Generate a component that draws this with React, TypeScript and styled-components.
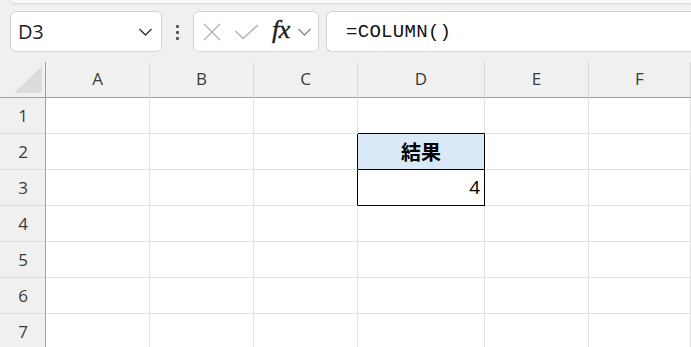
import React from "react";
import styled, { createGlobalStyle } from "styled-components";

const Global = createGlobalStyle`
  html, body { margin: 0; padding: 0; background: #f0f0f0; overflow: hidden; }
  #root { width: 691px; height: 347px; overflow: hidden; }
`;

const Page = styled.div`
  width: 691px;
  height: 347px;
  overflow: hidden;
  background: #f0f0f0;
  display: flex;
  flex-direction: column;
  font-family: "Open Sans", "Noto Sans", sans-serif;
  & > * { flex-shrink: 0; }
`;

const RibbonEdge = styled.div`
  margin-left: 12px;
  height: 3px;
  background: #f9f9f9;
  border-bottom-left-radius: 4px;
  box-shadow: 0 1px 2px rgba(0, 0, 0, 0.12);
`;

const Toolbar = styled.div`
  display: flex;
  align-items: center;
  padding: 8px 0 0 10px;
  height: 41px;
`;

const Box = styled.div<{ $w?: number }>`
  box-sizing: border-box;
  height: 41px;
  background: #fff;
  border: 1px solid #d4d4d4;
  border-radius: 6px;
  display: flex;
  align-items: center;
  ${(p) => (p.$w ? `width: ${p.$w}px;` : "flex: 1; border-right: none; border-radius: 6px 0 0 6px;")}
`;

const NameText = styled.span`
  font-family: "Open Sans", sans-serif;
  font-size: 20px;
  color: #1f1f1f;
  margin-left: 7px;
  flex: 1;
  letter-spacing: -0.3px;
`;

const Dots = styled.div`
  width: 31px;
  display: flex;
  flex-direction: column;
  align-items: center;
  gap: 3px;
  padding-top: 1px;
  span {
    width: 3px;
    height: 3px;
    background: #555;
    border-radius: 1px;
  }
`;

const Spacer = styled.div`
  width: 7px;
`;

const Formula = styled.span`
  font-family: "Liberation Mono", "DejaVu Sans Mono", monospace;
  font-size: 19px;
  color: #111;
  margin-left: 19px;
  letter-spacing: 0.3px;
`;

const Fx = styled.span`
  font-family: "Liberation Serif", serif;
  font-style: italic;
  font-weight: 400;
  font-size: 26px;
  color: #1c1c1c;
  margin-left: 12px;
  margin-top: -4px;
  letter-spacing: -0.5px;
  -webkit-text-stroke: 0.4px #1c1c1c;
`;

const Sheet = styled.div`
  margin-top: 10px;
  display: grid;
  grid-template-columns: 46px 104px 104px 104px 127px 104px 1fr;
  grid-template-rows: repeat(8, 36px);
`;

const Corner = styled.div`
  box-sizing: border-box;
  border-right: 1px solid #9e9e9e;
  border-bottom: 1px solid #9e9e9e;
  position: relative;
  &::after {
    content: "";
    position: absolute;
    left: 14px;
    top: 4px;
    width: 0;
    height: 0;
    border-left: 28px solid transparent;
    border-bottom: 27px solid #dcdcdc;
  }
`;

const ColHead = styled.div`
  box-sizing: border-box;
  border-right: 1px solid #d8d8d8;
  border-bottom: 1px solid #9e9e9e;
  display: flex;
  align-items: center;
  justify-content: center;
  font-size: 17px;
  color: #3a3a3a;
  padding-bottom: 2px;
`;

const RowHead = styled.div`
  box-sizing: border-box;
  border-right: 1px solid #9e9e9e;
  border-bottom: 1px solid #dadada;
  display: flex;
  align-items: center;
  justify-content: center;
  font-size: 17px;
  color: #3a3a3a;
  padding-left: 1px;
`;

const Cell = styled.div<{ $right?: boolean; $bottom?: boolean; $fill?: string; $align?: string; $bold?: boolean }>`
  box-sizing: border-box;
  background: ${(p) => p.$fill || "#fff"};
  border-right: 1px solid ${(p) => (p.$right ? "#000" : "#e1e1e1")};
  border-bottom: 1px solid ${(p) => (p.$bottom ? "#000" : "#e1e1e1")};
  display: flex;
  align-items: center;
  justify-content: ${(p) => p.$align || "flex-start"};
  padding: 0 4px 1px;
  font-family: "Open Sans", "Noto Sans CJK JP", sans-serif;
  font-size: ${(p) => (p.$bold ? "20px" : "19px")};
  font-weight: ${(p) => (p.$bold ? 700 : 400)};
  color: #000;
`;

const Chevron = ({ x = 0 }: { x?: number }) => (
  <svg width="15" height="10" viewBox="0 0 15 10" style={{ marginRight: x }}>
    <path d="M1.5 2 L7.5 8 L13.5 2" fill="none" stroke="#333" strokeWidth="1.4" />
  </svg>
);

const cols = ["A", "B", "C", "D", "E", "F"];

type CellSpec = { text?: string; right?: boolean; bottom?: boolean; fill?: string; align?: string; bold?: boolean };

function cellFor(r: number, c: number): CellSpec {
  const spec: CellSpec = {};
  if ((r === 2 || r === 3) && (c === 2 || c === 3)) spec.right = true;
  if ((r === 1 || r === 2 || r === 3) && c === 3) spec.bottom = true;
  if (r === 2 && c === 3) {
    spec.text = "結果";
    spec.fill = "#dae9f8";
    spec.align = "center";
    spec.bold = true;
  }
  if (r === 3 && c === 3) {
    spec.text = "4";
    spec.align = "flex-end";
  }
  return spec;
}

export default function App() {
  return (
    <Page>
      <Global />
      <RibbonEdge />
      <Toolbar>
        <Box $w={152}>
          <NameText>D3</NameText>
          <Chevron x={8} />
        </Box>
        <Dots>
          <span />
          <span />
          <span />
        </Dots>
        <Box $w={126}>
          <svg width="20" height="20" viewBox="0 0 20 20" style={{ marginLeft: 8 }}>
            <path d="M2 2 L18 18 M18 2 L2 18" stroke="#b5b5b5" strokeWidth="1.5" fill="none" />
          </svg>
          <svg width="26" height="20" viewBox="0 0 26 20" style={{ marginLeft: 12 }}>
            <path d="M1.5 9 L9 16.5 L24 3" stroke="#b5b5b5" strokeWidth="1.5" fill="none" />
          </svg>
          <Fx>fx</Fx>
          <svg width="15" height="10" viewBox="0 0 15 10" style={{ marginLeft: 7 }}>
            <path d="M1.5 2 L7.5 8 L13.5 2" fill="none" stroke="#888" strokeWidth="1.3" />
          </svg>
        </Box>
        <Spacer />
        <Box>
          <Formula>=COLUMN()</Formula>
        </Box>
      </Toolbar>
      <Sheet>
        <Corner />
        {cols.map((c) => (
          <ColHead key={c}>{c}</ColHead>
        ))}
        {[1, 2, 3, 4, 5, 6, 7].map((r) => (
          <React.Fragment key={r}>
            <RowHead>{r}</RowHead>
            {cols.map((c, ci) => {
              const s = cellFor(r, ci);
              return (
                <Cell key={c} $right={s.right} $bottom={s.bottom} $fill={s.fill} $align={s.align} $bold={s.bold}>
                  {s.text}
                </Cell>
              );
            })}
          </React.Fragment>
        ))}
      </Sheet>
    </Page>
  );
}
